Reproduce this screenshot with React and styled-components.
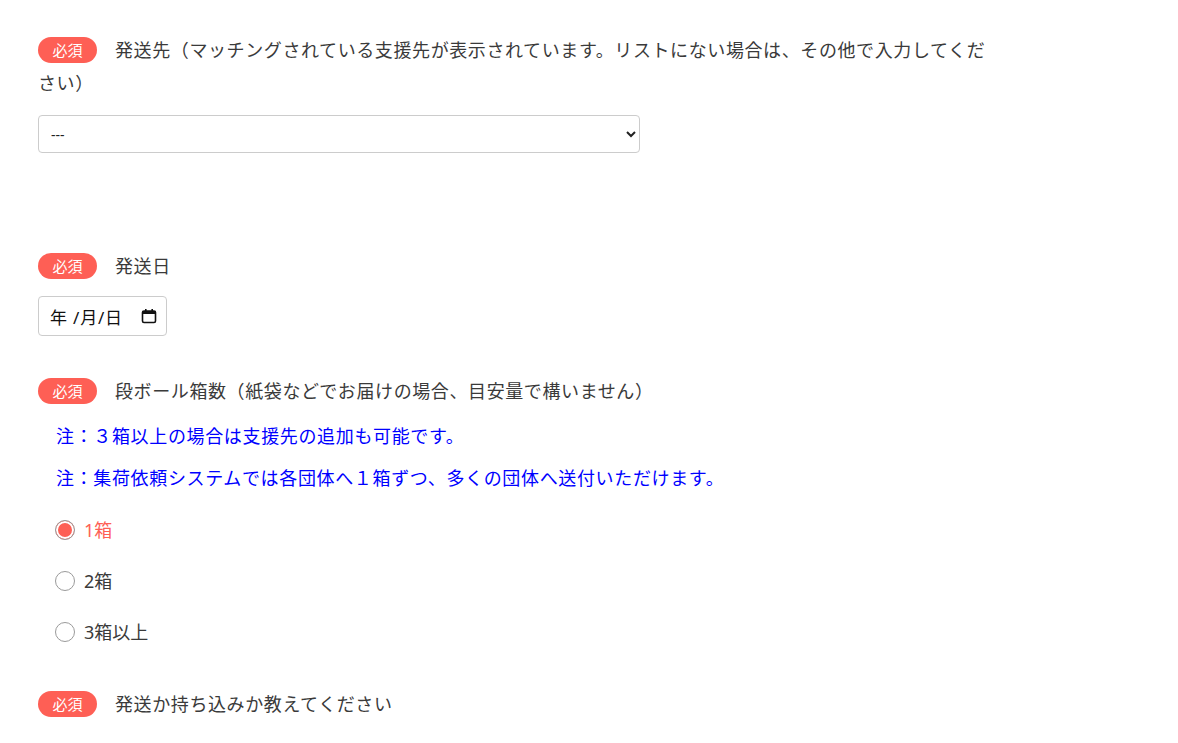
import React, { useState } from "react";
import styled, { createGlobalStyle } from "styled-components";

const GlobalStyle = createGlobalStyle`
  html, body { margin: 0; padding: 0; background: #fff; }
  body {
    font-family: "Noto Sans", "Noto Sans CJK JP", sans-serif;
    color: #3a3a3a;
  }
`;

const Page = styled.div`
  width: 960px;
  padding: 34px 38px 0;
`;

const Field = styled.div`
  margin-bottom: ${(p) => p.$gap || 0}px;
`;

const LabelRow = styled.div`
  font-size: 18px;
  line-height: 33px;
  letter-spacing: 0.6px;
  color: #3a3a3a;
`;

const LabelText = styled.span``;

const Badge = styled.span`
  display: inline-block;
  width: 59px;
  height: 26px;
  line-height: 26px;
  border-radius: 13px;
  background: #fe5f55;
  color: #fff;
  font-size: 15px;
  letter-spacing: 0;
  text-align: center;
  vertical-align: 1px;
  margin-right: 18px;
`;

const Select = styled.select`
  display: block;
  margin-top: 15px;
  width: 602px;
  height: 38px;
  padding: 0 8px;
  border: 1px solid #ccc;
  border-radius: 4px;
  background: #fff;
  font-family: "Noto Sans", "Noto Sans CJK JP", sans-serif;
  font-size: 14px;
  color: #222;
`;

const DateBox = styled.div`
  display: flex;
  align-items: center;
  justify-content: space-between;
  margin-top: 13px;
  width: 129px;
  height: 40px;
  box-sizing: border-box;
  padding: 0 9px 0 11px;
  border: 1px solid #ccc;
  border-radius: 4px;
  font-size: 17px;
  letter-spacing: 0.8px;
  color: #111;
`;

const Notes = styled.div`
  margin-top: 7px;
  padding-left: 18px;
`;

const Note = styled.p`
  margin: 0;
  font-size: 18px;
  line-height: 42px;
  letter-spacing: 0.65px;
  color: #0000ff;
`;

const RadioList = styled.div`
  margin-top: 5px;
  padding-left: 17px;
`;

const RadioRow = styled.label`
  display: flex;
  align-items: center;
  gap: 9px;
  height: 51px;
  font-size: 18px;
  line-height: 1;
  color: ${(p) => (p.$checked ? "#fe5f55" : "#3a3a3a")};
  cursor: pointer;
`;

const Radio = styled.input`
  appearance: none;
  margin: 0;
  width: 20px;
  height: 20px;
  border: 1px solid #9a9a9a;
  border-radius: 50%;
  background: #fff;
  box-sizing: border-box;
  &:checked {
    background: #fe5f55;
    box-shadow: inset 0 0 0 2px #fff;
  }
`;

const CalendarIcon = () => (
  <svg width="16" height="16" viewBox="0 0 16 16">
    <rect x="1.5" y="3" width="13" height="11.5" rx="1.5" fill="none" stroke="#111" strokeWidth="1.6" />
    <rect x="1.5" y="3" width="13" height="3" fill="#111" />
    <rect x="4" y="1" width="1.6" height="3" fill="#111" />
    <rect x="10.4" y="1" width="1.6" height="3" fill="#111" />
  </svg>
);

const options = ["1箱", "2箱", "3箱以上"];

export default function App() {
  const [boxes, setBoxes] = useState("1箱");
  return (
    <>
      <GlobalStyle />
      <Page>
        <Field $gap={97}>
          <LabelRow>
            <Badge>必須</Badge>
            <LabelText>
              発送先（マッチングされている支援先が表示されています。リストにない場合は、その他で入力してください）
            </LabelText>
          </LabelRow>
          <Select defaultValue="">
            <option value="">---</option>
          </Select>
        </Field>

        <Field $gap={39}>
          <LabelRow>
            <Badge>必須</Badge>
            <LabelText>発送日</LabelText>
          </LabelRow>
          <DateBox>
            <span>年 /月/日</span>
            <CalendarIcon />
          </DateBox>
        </Field>

        <Field $gap={31}>
          <LabelRow>
            <Badge>必須</Badge>
            <LabelText>段ボール箱数（紙袋などでお届けの場合、目安量で構いません）</LabelText>
          </LabelRow>
          <Notes>
            <Note>注：３箱以上の場合は支援先の追加も可能です。</Note>
            <Note>注：集荷依頼システムでは各団体へ１箱ずつ、多くの団体へ送付いただけます。</Note>
          </Notes>
          <RadioList>
            {options.map((o) => (
              <RadioRow key={o} $checked={boxes === o}>
                <Radio
                  type="radio"
                  name="boxes"
                  checked={boxes === o}
                  onChange={() => setBoxes(o)}
                />
                {o}
              </RadioRow>
            ))}
          </RadioList>
        </Field>

        <Field>
          <LabelRow>
            <Badge>必須</Badge>
            <LabelText>発送か持ち込みか教えてください</LabelText>
          </LabelRow>
        </Field>
      </Page>
    </>
  );
}
